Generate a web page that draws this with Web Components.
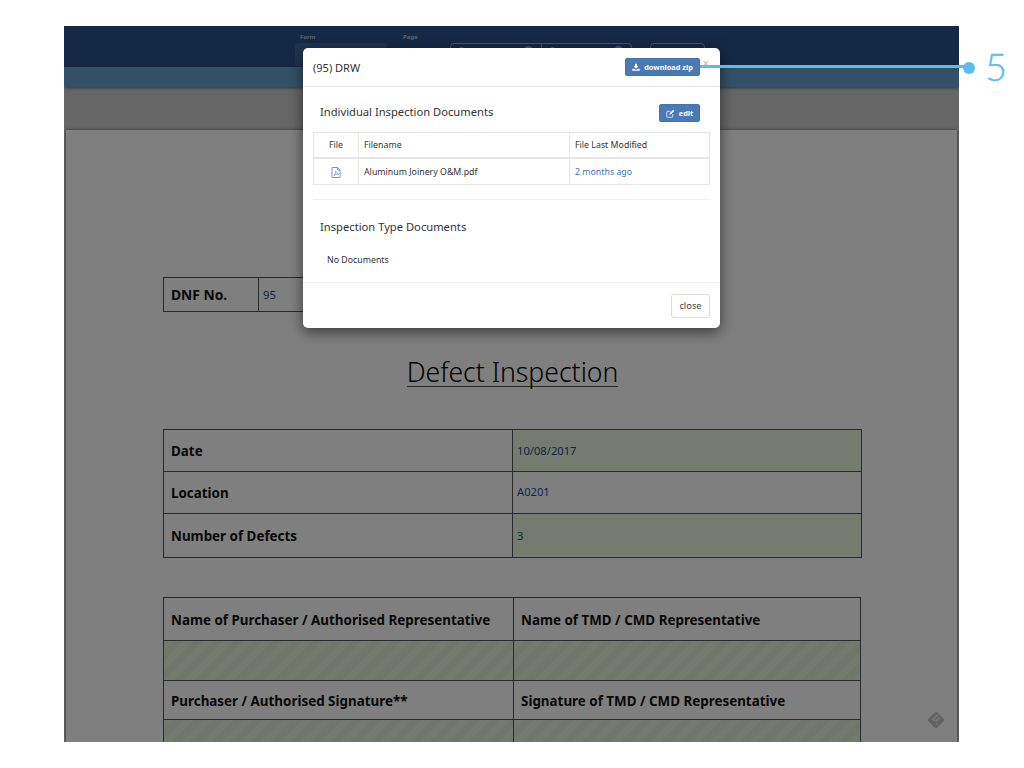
<!DOCTYPE html>
<html lang="en"><head><meta charset="utf-8"><title>Defect Inspection</title>
<style>
html,body{margin:0;background:#fff;height:768px;overflow:hidden}
body{font-family:"Noto Sans",sans-serif}
</style></head><body>
<report-screen>
  <app-toolbar></app-toolbar>
  <doc-sheet></doc-sheet>
  <modal-dialog slot="top"></modal-dialog>
  <call-out slot="top" num="5"></call-out>
</report-screen>
<script>
function def(name,html,init){
  customElements.define(name,class extends HTMLElement{
    connectedCallback(){
      if(this.shadowRoot)return;
      const r=this.attachShadow({mode:'open'});
      r.innerHTML=html;
      if(init)init.call(this,r);
    }
  });
}
def('report-screen',`<style>
:host{display:block;position:relative;width:1024px;height:768px;overflow:hidden;background:#fff;padding:26px 0 0 64px;box-sizing:border-box}
.frame{position:relative;width:895px;height:716px;overflow:hidden;display:flex;flex-direction:column;background:#ccc}
.scrim{position:absolute;inset:0;background:rgba(0,0,0,.5)}
</style><div class="frame"><slot></slot><div class="scrim"></div></div><slot name="top"></slot>`);
def('app-toolbar',`<style>
:host{display:block;flex:none;font:600 6px "Noto Sans",sans-serif;color:#c9d3e2}
.bar{height:41px;background:#28528c;display:flex;padding:8px 0 0 231px;box-sizing:border-box;overflow:hidden}
.f{display:flex;flex-direction:column;gap:3px}
.lab{height:6px;line-height:6px;padding-left:5px}
.sel{width:92px;height:24px;border-radius:3px;background:#3f66a0}
.pg{width:47px;margin-left:11px}.pg .sel{width:47px;background:none}
.grp{display:flex;margin:9px 0 0 5px;width:182px;height:24px;border:1px solid #8ea6cc;border-radius:4px;box-sizing:border-box}
.grp i{display:block;flex:1;position:relative}.grp i+i{border-left:1px solid #8ea6cc}
.grp i::before{content:"";position:absolute;left:8px;top:3px;width:5px;height:5px;border-radius:50%;background:#9db1d2}
.grp i::after{content:"";position:absolute;right:8px;top:2px;width:9px;height:9px;border-radius:50%;background:#9db1d2}
.b{margin:9px 0 0 18px;width:55px;height:24px;border:1px solid #8ea6cc;border-radius:4px;box-sizing:border-box}
.band{height:20px;background:#68a0cc;box-shadow:0 1px 3px rgba(0,0,0,.5);position:relative}
.sub{height:43px;background:#ccc}
</style><div class="bar"><div class="f"><span class="lab">Form</span><div class="sel"></div></div><div class="f pg"><span class="lab">Page</span><div class="sel"></div></div><div class="grp"><i></i><i></i></div><div class="b"></div></div><div class="band"></div><div class="sub"></div>`);
def('doc-table',`<style>
:host{display:block;font:700 13.4px/1 "Noto Sans",sans-serif;color:#111}
.t{display:grid;grid-template-columns:var(--c,348px) 1fr;border:1px solid #555;border-width:1px 1px 0 1px;box-sizing:border-box}
</style><div class="t"><slot></slot></div>`);
def('doc-cell',`<style>
:host{display:flex;align-items:center;box-sizing:border-box;border-bottom:1px solid #555;padding:4px 7px 0;min-width:0;height:var(--h,42px)}
:host([val]){font:400 11.2px "Noto Sans",sans-serif;color:#2a4590;padding:0 7px 0 4px}
:host([right]){border-left:1px solid #555}
:host([green]){background:#eaf7de}
:host([striped]){background:repeating-linear-gradient(135deg,#e9f6dd 0 7px,#e0eed5 7px 14px)}
</style><slot></slot>`);
def('doc-sheet',`<style>
:host{display:block;margin:0 2px;background:#fff;padding:147px 0 0 97px;flex:1;box-shadow:0 0 3px rgba(0,0,0,.5);position:relative;min-height:0}
h1{font:300 26.6px/1 "Noto Sans",sans-serif;color:#000;margin:47px 0 0;width:699px;text-align:center}
h1 span{display:inline-block;border-bottom:1px solid #555}
.dnf{--h:34px;--c:94px;width:280px}
.dnf doc-cell:first-child{font-size:13.8px;padding-top:0}
.t2{margin-top:42px;width:699px}
.t3{margin-top:39px;width:698px;--c:349px}
.dg{position:absolute;left:860px;top:580px;width:20px;height:20px}
</style>
<doc-table class="dnf"><doc-cell>DNF No.</doc-cell><doc-cell val right>95</doc-cell></doc-table>
<h1><span>Defect Inspection</span></h1>
<doc-table class="t2">
<doc-cell>Date</doc-cell><doc-cell val right green>10/08/2017</doc-cell>
<doc-cell>Location</doc-cell><doc-cell val right style="padding-bottom:1px">A0201</doc-cell>
<doc-cell style="--h:44px">Number of Defects</doc-cell><doc-cell val right green style="--h:44px">3</doc-cell>
</doc-table>
<doc-table class="t3">
<doc-cell style="--h:43px">Name of Purchaser / Authorised Representative</doc-cell><doc-cell right style="--h:43px">Name of TMD / CMD Representative</doc-cell>
<doc-cell striped style="--h:40px"></doc-cell><doc-cell striped right style="--h:40px"></doc-cell>
<doc-cell style="--h:39px">Purchaser / Authorised Signature**</doc-cell><doc-cell right style="--h:39px">Signature of TMD / CMD Representative</doc-cell>
<doc-cell striped style="--h:40px"></doc-cell><doc-cell striped right style="--h:40px"></doc-cell>
</doc-table>
<svg class="dg" viewBox="0 0 20 20"><path d="M10 2.5 17.5 10 10 17.5 2.5 10Z" fill="#c4c4c4" stroke="#c4c4c4" stroke-width="2" stroke-linejoin="round"/><path d="M11.5 5 7 9.5 9 11.5M13.5 7.5 9.5 11.5M11.5 13.5 10.5 14.5" stroke="#f2f2f2" stroke-width="1.6" fill="none"/></svg>`);
def('ui-button',`<style>
:host{display:inline-flex;align-items:center;justify-content:center;gap:4px;box-sizing:border-box;height:18px;border-radius:2px;background:#4a7ab3;border:1px solid #4474ac;color:#fff;font:700 7.4px "Noto Sans",sans-serif}
:host([plain]){height:24px;background:#fff;border:1px solid #ddd;color:#444;font:400 9.3px "Noto Sans",sans-serif;border-radius:3px}
</style><slot name="icon"></slot><slot></slot>`);
def('modal-dialog',`<style>
:host{display:flex;flex-direction:column;position:absolute;left:303px;top:48px;width:417px;height:280px;background:#fff;border-radius:5px;box-shadow:0 4px 14px rgba(0,0,0,.55);font:400 8.8px "Noto Sans",sans-serif;color:#333;box-sizing:border-box}
header{height:39px;flex:none;box-sizing:border-box;border-bottom:1px solid #e8e8e8;display:flex;align-items:center;padding:0 20px 0 10px;position:relative}
header h2{font:400 11px "Noto Sans",sans-serif;margin:0;flex:1;color:#333}
.x{position:absolute;right:11px;top:10px;color:#bbb;font-size:12px;line-height:1}
.dl{width:75px}
.sec{height:45px;flex:none;box-sizing:border-box;display:flex;align-items:flex-start;justify-content:space-between;padding:17px 20px 0 17px}
h3{font:400 11.2px/16px "Noto Sans",sans-serif;margin:0;color:#333}
.ed{width:41px}
table{border-collapse:collapse;margin-left:10px;width:397px;table-layout:fixed;flex:none}
td,th{border:1px solid #e6e6e6;font:400 8.8px "Noto Sans",sans-serif;padding:0 5px;height:25px;text-align:left;color:#333}
th{border-bottom-width:2px;height:24px}
.c{text-align:center}
a{color:#3f74b5;text-decoration:none}
hr{border:0;border-top:1px solid #f0f0f0;margin:14px 10px 0;width:397px;box-sizing:border-box}
.s2{padding:19px 0 0 17px}
.none{padding:18px 0 0 24px;line-height:14px}
footer{margin-top:auto;height:46px;flex:none;border-top:1px solid #eee;box-sizing:border-box;display:flex;justify-content:flex-end;align-items:center;padding-right:10px}
.cl{width:39px}
svg.pdf{width:10px;height:11px;display:inline-block;vertical-align:middle}
</style>
<header><h2>(95) DRW</h2><ui-button class="dl"><svg slot="icon" viewBox="0 0 12 12" style="width:8px;height:8px;fill:#fff;display:block"><path d="M4.5 1h3v4h2.2L6 8.6 2.3 5h2.2ZM.5 8.5h2.6L6 10.6l2.9-2.1h2.6V11.5H.5Z"/></svg>download zip</ui-button><span class="x">×</span></header>
<div class="sec"><h3>Individual Inspection Documents</h3><ui-button class="ed"><svg slot="icon" viewBox="0 0 12 12" style="width:9px;height:9px;display:block"><path d="M9 6.8V10a1 1 0 0 1-1 1H2a1 1 0 0 1-1-1V4a1 1 0 0 1 1-1h4" fill="none" stroke="#fff" stroke-width="1"/><path d="M4.5 7.5 5 5.5 9.5 1 11 2.5 6.5 7Z" fill="#fff"/></svg>edit</ui-button></div>
<table><colgroup><col style="width:45px"><col style="width:211px"><col></colgroup>
<tr><th class="c">File</th><th>Filename</th><th>File Last Modified</th></tr>
<tr><td class="c"><svg class="pdf" viewBox="0 0 10 11"><path d="M1 .5H6.5L9 3V10.5H1ZM6.5.5V3H9" fill="none" stroke="#5f8fc8" stroke-width=".9"/><path d="M2.8 8.8C4 8 5 5.5 4.7 4.2 5 5.8 6 7 7.6 7.2 6 7 4 7.6 2.8 8.8Z" fill="none" stroke="#5f8fc8" stroke-width=".7"/></svg></td><td>Aluminum Joinery O&amp;M.pdf</td><td><a>2 months ago</a></td></tr></table>
<hr>
<div class="s2"><h3>Inspection Type Documents</h3></div>
<div class="none">No Documents</div>
<footer><ui-button plain class="cl">close</ui-button></footer>`);
def('call-out',`<style>
:host{display:block;position:absolute;left:700px;top:52px;width:320px;height:32px;pointer-events:none}
.l{position:absolute;left:0;top:13px;width:265px;height:3px;background:#5bbcf0}
.d{position:absolute;left:263px;top:10px;width:12px;height:12px;border-radius:50%;background:#5bbcf0}
.n{position:absolute;left:285px;top:-5px;font:300 38px/1 Lato,sans-serif;color:#5bbcf0;-webkit-text-stroke:.3px #5bbcf0}
</style><div class="l"></div><div class="d"></div><div class="n"></div>`,function(r){r.querySelector('.n').textContent=this.getAttribute('num');});
</script></body></html>
